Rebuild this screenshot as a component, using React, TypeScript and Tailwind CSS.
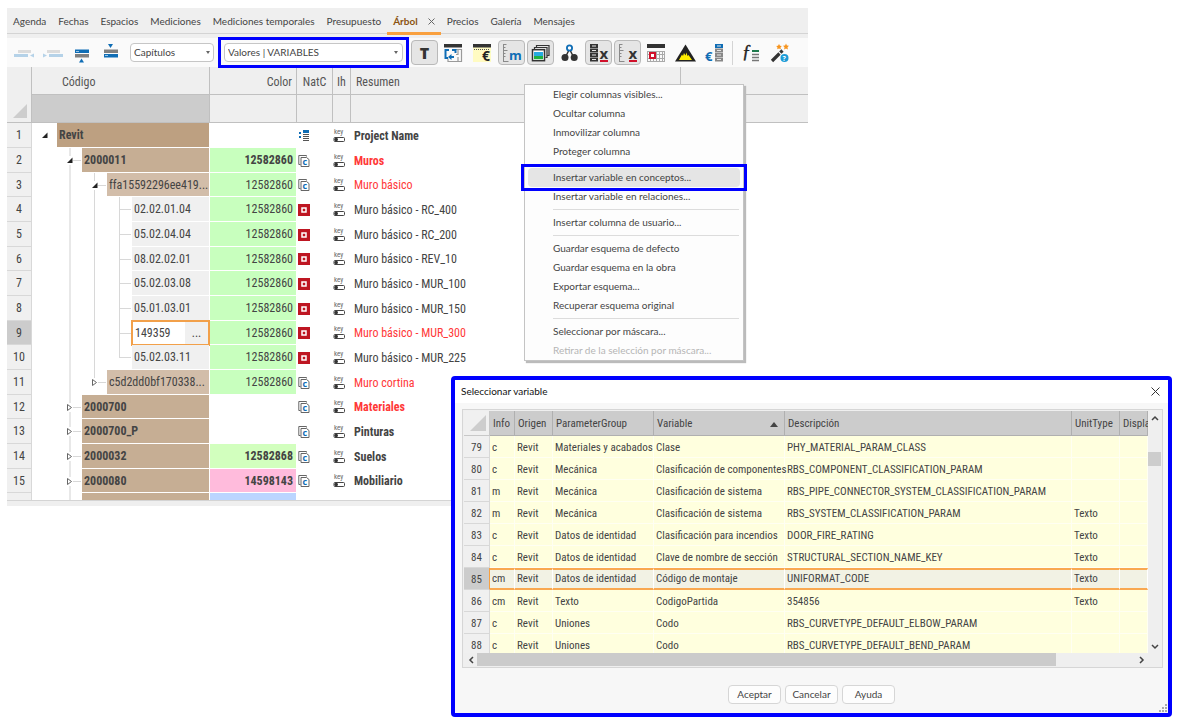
import { useState } from 'react';
import type { ReactNode } from 'react';
import clsx from 'clsx';

type Icon = 'project' | 'chapter' | 'unit';

interface TreeRow {
  id: number; level: 0 | 1 | 2 | 3; code: string; open?: boolean; last?: boolean; guides: number[];
  color?: string; fill?: string; icon: Icon; summary: string; bold?: boolean; red?: boolean;
}

const GREEN = 'bg-[#c8ffbe]';

const rows: TreeRow[] = [
  { id: 1, level: 0, code: 'Revit', open: true, guides: [], icon: 'project', summary: 'Project Name', bold: true },
  { id: 2, level: 1, code: '2000011', open: true, guides: [], color: '12582860', fill: GREEN, icon: 'chapter', summary: 'Muros', bold: true, red: true },
  { id: 3, level: 2, code: 'ffa15592296ee419...', open: true, guides: [1], color: '12582860', fill: GREEN, icon: 'chapter', summary: 'Muro básico', red: true },
  { id: 4, level: 3, code: '02.02.01.04', guides: [1, 2], color: '12582860', fill: GREEN, icon: 'unit', summary: 'Muro básico - RC_400' },
  { id: 5, level: 3, code: '05.02.04.04', guides: [1, 2], color: '12582860', fill: GREEN, icon: 'unit', summary: 'Muro básico - RC_200' },
  { id: 6, level: 3, code: '08.02.02.01', guides: [1, 2], color: '12582860', fill: GREEN, icon: 'unit', summary: 'Muro básico - REV_10' },
  { id: 7, level: 3, code: '05.02.03.08', guides: [1, 2], color: '12582860', fill: GREEN, icon: 'unit', summary: 'Muro básico - MUR_100' },
  { id: 8, level: 3, code: '05.01.03.01', guides: [1, 2], color: '12582860', fill: GREEN, icon: 'unit', summary: 'Muro básico - MUR_150' },
  { id: 9, level: 3, code: '149359', guides: [1, 2], color: '12582860', fill: GREEN, icon: 'unit', summary: 'Muro básico - MUR_300', red: true },
  { id: 10, level: 3, code: '05.02.03.11', last: true, guides: [1, 2], color: '12582860', fill: GREEN, icon: 'unit', summary: 'Muro básico - MUR_225' },
  { id: 11, level: 2, code: 'c5d2dd0bf170338...', open: false, last: true, guides: [1], color: '12582860', fill: GREEN, icon: 'chapter', summary: 'Muro cortina', red: true },
  { id: 12, level: 1, code: '2000700', open: false, guides: [], icon: 'chapter', summary: 'Materiales', bold: true, red: true },
  { id: 13, level: 1, code: '2000700_P', open: false, guides: [], icon: 'chapter', summary: 'Pinturas', bold: true },
  { id: 14, level: 1, code: '2000032', open: false, guides: [], color: '12582868', fill: 'bg-[#d2ffbe]', icon: 'chapter', summary: 'Suelos', bold: true },
  { id: 15, level: 1, code: '2000080', open: false, guides: [], color: '14598143', fill: 'bg-[#ffbbdc]', icon: 'chapter', summary: 'Mobiliario', bold: true },
];

const levelFill = ['bg-[#bda081]', 'bg-[#c6ae94]', 'bg-[#d2bda9]', 'bg-[#f0f0f0]'];

interface Variable { id: number; info: string; group: string; name: string; description: string; unit?: string }

const variables: Variable[] = [
  { id: 79, info: 'c', group: 'Materiales y acabados', name: 'Clase', description: 'PHY_MATERIAL_PARAM_CLASS' },
  { id: 80, info: 'c', group: 'Mecánica', name: 'Clasificación de componentes', description: 'RBS_COMPONENT_CLASSIFICATION_PARAM' },
  { id: 81, info: 'm', group: 'Mecánica', name: 'Clasificación de sistema', description: 'RBS_PIPE_CONNECTOR_SYSTEM_CLASSIFICATION_PARAM' },
  { id: 82, info: 'm', group: 'Mecánica', name: 'Clasificación de sistema', description: 'RBS_SYSTEM_CLASSIFICATION_PARAM', unit: 'Texto' },
  { id: 83, info: 'c', group: 'Datos de identidad', name: 'Clasificación para incendios', description: 'DOOR_FIRE_RATING', unit: 'Texto' },
  { id: 84, info: 'c', group: 'Datos de identidad', name: 'Clave de nombre de sección', description: 'STRUCTURAL_SECTION_NAME_KEY', unit: 'Texto' },
  { id: 85, info: 'cm', group: 'Datos de identidad', name: 'Código de montaje', description: 'UNIFORMAT_CODE', unit: 'Texto' },
  { id: 86, info: 'cm', group: 'Texto', name: 'CodigoPartida', description: '354856', unit: 'Texto' },
  { id: 87, info: 'c', group: 'Uniones', name: 'Codo', description: 'RBS_CURVETYPE_DEFAULT_ELBOW_PARAM' },
  { id: 88, info: 'c', group: 'Uniones', name: 'Codo', description: 'RBS_CURVETYPE_DEFAULT_BEND_PARAM' },
];

const menuGroups = [
  ['Elegir columnas visibles...', 'Ocultar columna', 'Inmovilizar columna', 'Proteger columna'],
  ['Insertar variable en conceptos...', 'Insertar variable en relaciones...'],
  ['Insertar columna de usuario...'],
  ['Guardar esquema de defecto', 'Guardar esquema en la obra', 'Exportar esquema...', 'Recuperar esquema original'],
  ['Seleccionar por máscara...', 'Retirar de la selección por máscara...'],
];

/* Toolbar drawings, all on a 27x25 canvas */
const Ruler = () => (
  <path d="M5.5 4v18M5.5 4.5h3M5.5 7.5h2M5.5 10.5h4M5.5 13.5h2M5.5 16.5h2M5.5 21.5h5" stroke="#8a8a8a" fill="none" />
);

const Server = ({ x, top = '#333', rest = '#333' }: { x: number; top?: string; rest?: string }) => (
  <g>
    {[3.5, 8, 12.5, 17].map((y, i) => (
      <g key={y}>
        <rect x={x} y={y + 0.5} width="8" height="4" fill={i === 0 ? top : rest} />
        <rect x={x + 2} y={y + 2} width="4" height="1" fill="#e5e5e5" />
      </g>
    ))}
  </g>
);

const glyphs: { name: string; on?: boolean; draw: ReactNode }[] = [
  { name: 'Ventana', draw: <>
    <rect x="4" y="4" width="18" height="3.5" fill="#333" />
    <path d="M15 9.5h6.500v12H8v-3M18 9.500v5h-2M18 17v4" stroke="#9a9a9a" strokeWidth="1.200" fill="none" />
    <path d="M9 10H5.500v8H8M12 10h3.500v3" stroke="#0f6db5" strokeWidth="2" fill="none" />
    <path d="M14 17h-4" stroke="#0f6db5" strokeWidth="2" /><path d="M8 17l3.500-3v6z" fill="#0f6db5" />
  </> },
  { name: 'Precio', draw: <>
    <rect x="4" y="7" width="18" height="15" fill="#fffbc2" />
    <rect x="4" y="4" width="18" height="3.5" fill="#333" />
    <path d="M5 9.500h16" stroke="#555" strokeDasharray="1 1" />
    <text x="13" y="21" fontSize="14" fontWeight="bold" fill="#222">€</text>
  </> },
  { name: 'Medición', on: true, draw: <>
    <Ruler />
    <text x="11" y="20" fontSize="13" fontWeight="bold" fill="#0f6db5">m</text>
  </> },
  { name: 'Capas', on: true, draw: <>
    <path d="M9.500 7V5.500h12.500v10h-1.500M7.500 9V7.500h12.500v10h-1.500" stroke="#333" strokeWidth="1.200" fill="none" />
    <rect x="5.500" y="9.700" width="12" height="11" fill="#fff" stroke="#333" strokeWidth="1.500" />
    <rect x="7" y="12" width="9" height="4" fill="#27aae1" />
    <rect x="7" y="16" width="9" height="3.200" fill="#1fb141" />
  </> },
  { name: 'Relaciones', draw: <>
    <path d="M13.500 9L9 18M13.500 9L18 18" stroke="#333" strokeWidth="1.500" />
    <circle cx="13.500" cy="8" r="2.600" fill="#fff" stroke="#0f6db5" strokeWidth="1.800" />
    <circle cx="9" cy="17.500" r="3.500" fill="#333" /><circle cx="18.200" cy="17.500" r="3.500" fill="#333" />
  </> },
  { name: 'Quitar conceptos', on: true, draw: <>
    <Server x={5} />
    <text x="14.500" y="19" fontSize="15" fontWeight="bold" fill="#333">x</text>
    <rect x="15" y="20" width="8" height="2" fill="#d0112b" />
  </> },
  { name: 'Quitar mediciones', on: true, draw: <>
    <Ruler />
    <text x="14.500" y="19" fontSize="15" fontWeight="bold" fill="#333">x</text>
    <rect x="15" y="20" width="8" height="2" fill="#d0112b" />
  </> },
  { name: 'Fechas', draw: <>
    <rect x="4" y="4" width="18" height="4" fill="#333" />
    <path d="M4.500 11v11M7.500 11v11M10.500 11v11M13.500 11v11M16.500 11v11M19.500 11v11M21.500 11v11M4 11.500h18M4 14.500h18M4 18.500h18M4 21.500h18" stroke="#aaa" />
    <rect x="7" y="13" width="5" height="5" fill="#fff" stroke="#d0112b" strokeWidth="2" />
  </> },
  { name: 'Avisos', draw: <>
    <path d="M13.500 4.500L24 21.500H3z" fill="#222" />
    <path d="M7 20l3-5.500 1 1.500 1-3 1.500 2.500 1-3 1 3.500 1-1L20 20z" fill="#ffee00" />
  </> },
  { name: 'Lista de precios', draw: <>
    <Server x={14} top="#0f6db5" rest="#888" />
    <text x="4" y="21" fontSize="13" fontWeight="bold" fill="#0f6db5">€</text>
  </> },
];

const tools: { name: string; draw: ReactNode }[] = [
  { name: 'Fórmulas', draw: <>
    <text x="5" y="18" fontSize="18" fontStyle="italic" fontFamily="Liberation Serif, serif" fill="#222" stroke="#222" strokeWidth=".4">ƒ</text>
    <path d="M15 11h7" stroke="#1f7a4d" strokeWidth="2" />
    <path d="M15 14.500h7M15 17.500h7M15 20.500h7" stroke="#777" strokeWidth="1.500" />
  </> },
  { name: 'Asistente', draw: <>
    <path d="M6 21L13.500 13.500" stroke="#333" strokeWidth="3.200" />
    <path d="M14.300 12.700L16.500 10.500" stroke="#333" strokeWidth="3.200" />
    <path d="M13 4l1 1.700 1.800.4-1.300 1.300.3 1.900-1.800-.9-1.800.9.3-1.900-1.300-1.300 1.800-.4zM20 3.500l.9 2 2.100.3-1.500 1.500.4 2.100-1.900-1-1.900 1 .4-2.100L17 5.800l2.100-.3z" fill="#f7941d" />
    <circle cx="18.500" cy="18" r="4" fill="#1b9ad6" />
    <text x="16.500" y="21" fontSize="7" fontWeight="bold" fill="#fff">?</text>
  </> },
];

const moves: { name: string; draw: ReactNode }[] = [
  { name: 'Subir nivel', draw: <>
    <rect x="8" y="10" width="13" height="3" fill="#dcdcdc" /><rect x="4" y="14" width="14" height="3" fill="#b5d2e8" />
    <path d="M24 13.500v4l-4-2z" fill="#b5d2e8" />
  </> },
  { name: 'Bajar nivel', draw: <>
    <rect x="8" y="10" width="13" height="3" fill="#dcdcdc" /><rect x="10" y="14" width="14" height="3" fill="#b5d2e8" />
    <path d="M4 13.500v4l4-2z" fill="#b5d2e8" />
  </> },
  { name: 'Subir', draw: <>
    <rect x="7" y="9.500" width="14" height="3.500" fill="#0f6db5" /><rect x="7" y="14" width="14" height="3.500" fill="#808080" />
    <path d="M11 22.500h5l-2.500-4z" fill="#0f6db5" /><rect x="8" y="11" width="3" height="1" fill="#9cc4e2" />
  </> },
  { name: 'Bajar', draw: <>
    <rect x="7" y="9.500" width="14" height="3.500" fill="#808080" /><rect x="7" y="14" width="14" height="3.500" fill="#0f6db5" />
    <path d="M11 4h5l-2.500 4z" fill="#0f6db5" /><rect x="8" y="15" width="3" height="1" fill="#9cc4e2" />
  </> },
];

const ToolButton = ({ name, on, children }: { name: string; on?: boolean; children: ReactNode }) => (
  <button aria-label={name} className={clsx('h-[25px] w-[27px] shrink-0 rounded border', on ? 'border-[#b9b9b9] bg-[#e5e5e5]' : 'border-transparent')}>
    <svg viewBox="1 1 25 23" className="block h-[23px] w-[25px] font-['Open_Sans',sans-serif]">{children}</svg>
  </button>
);

const NatIcon = ({ icon }: { icon: Icon }) => (
  <svg viewBox="0 0 12 12" className="block size-3 font-['Open_Sans',sans-serif]">
    {icon === 'project' && <>
      <path d="M1 3h2M1 7h2" stroke="#0f6db5" strokeWidth="2" />
      <rect x="5" y="0" width="6" height="3" fill="#0f6db5" />
      <path d="M5 4.500h6M5 6.500h6M5 8.500h6M5 10.500h6" stroke="#555" strokeWidth="1.200" />
    </>}
    {icon === 'chapter' && <>
      <path d="M2.500 9.500H.8V.5h7.700v1" stroke="#666" fill="none" />
      <path d="M3 2.500h5.500l2.500 2v7H3z" stroke="#666" fill="#fff" />
      <text x="4.500" y="10" fontSize="9" fontWeight="bold" fill="#0f6db5">c</text>
    </>}
    {icon === 'unit' && <>
      <rect x="0" y="0" width="12" height="12" fill="#be1622" />
      <rect x="4" y="4" width="4" height="4" fill="none" stroke="#fff" strokeWidth="1.500" />
    </>}
  </svg>
);

const KeyIcon = () => (
  <svg viewBox="0 0 12 12" className="block size-3 overflow-visible">
    <text x="1" y="4" fontSize="7" fill="#666">key</text>
    <rect x="1" y="7.500" width="10.500" height="4" rx="1" fill="#fff" stroke="#444" />
    <circle cx="3.200" cy="9.500" r="1.800" fill="#333" />
  </svg>
);

const Caret = ({ open }: { open: boolean }) => (
  <svg viewBox="0 0 7 9" className="block h-[9px] w-[7px]">
    {open ? <path d="M6.500 1.500v5.500H1z" fill="#222" /> : <path d="M1.500 1.500v6l4-3z" fill="#fff" stroke="#666" />}
  </svg>
);

const CodeCell = ({ row }: { row: TreeRow }) => (
  <div className="flex h-full pr-px">
    {Array.from({ length: row.level + 1 }, (_, i) => {
      const own = i === row.level;
      const line = i > 0 && (own || row.guides.includes(i));
      return (
        <span key={i} className="relative flex h-full w-[25px] shrink-0 items-center">
          {line && <span className={clsx('absolute top-0 left-3 w-px', i === 1 ? 'border-l-2 border-[#e8e8e8]' : 'bg-[#d8d8d8]', own && row.last ? 'h-1/2' : 'h-full')} />}
          {own && i > 0 && <span className="absolute right-px left-3 h-px bg-[#d8d8d8]" />}
          {own && row.open !== undefined && <span className="relative ml-[9px] bg-white"><Caret open={row.open} /></span>}
        </span>
      );
    })}
    {row.id === 9 ? (
      <div className="-mx-px -my-px flex grow border-2 border-[#f2a04a] bg-white">
        <input aria-label="Código" defaultValue={row.code} className="w-0 grow pl-[2px] outline-none" />
        <button aria-label="Buscar código" className="w-[23px] bg-[#f0f0f0]">...</button>
      </div>
    ) : (
      <div className={clsx('flex min-w-0 grow items-center border-b border-white pl-[2px] whitespace-nowrap', levelFill[row.level], row.level < 2 && 'font-bold')}>{row.code}</div>
    )}
  </div>
);

const ContextMenu = () => (
  <ul role="menu" className="absolute top-[76px] left-[517px] w-[220px] border border-[#c4c4c4] bg-[#fdfdfd] text-[10px] text-[#444] shadow-[2px_2px_1px_#bbb]">
    {menuGroups.map((group, g) => (
      <li key={g} role="none">
        {g > 0 && <hr className="my-[3px] mr-1 ml-7 border-[#dcdcdc]" />}
        {group.map((label) => {
          const active = label === 'Insertar variable en conceptos...';
          return (
            <button key={label} role="menuitem" disabled={label.startsWith('Retirar')} className="relative flex h-[19px] w-full items-center px-[3px] whitespace-nowrap disabled:text-[#b5b5b5]">
              <span className={clsx('flex h-full w-full items-center rounded pl-[25px]', active && 'bg-[#e5e5e5]')}>{label}</span>
              {active && <span className="absolute -inset-x-1 -inset-y-1 border-3 border-[#0000ff]" />}
            </button>
          );
        })}
      </li>
    ))}
  </ul>
);

const ScrollArrow = ({ d, label }: { d: string; label: string }) => (
  <button aria-label={label} className="flex size-[13px] shrink-0 items-center justify-center">
    <svg viewBox="0 0 8 8" className="size-2"><path d={d} fill="none" stroke="#444" strokeWidth="1.500" /></svg>
  </button>
);

const VariableDialog = ({ onClose }: { onClose: () => void }) => {
  const [selected, setSelected] = useState(85);
  const headers = ['Info', 'Origen', 'ParameterGroup', 'Variable', 'Descripción', 'UnitType', 'Display'];

  return (
    <div role="dialog" aria-labelledby="dialog-title" className="absolute top-[376px] right-[18px] left-[451px] rounded-sm border-4 border-[#0000ff] bg-[#f7f7f7]">
      <div className="flex h-[23px] items-center justify-between bg-white pr-2 pl-[6px]">
        <h2 id="dialog-title" className="text-[10px] text-[#111]">Seleccionar variable</h2>
        <button aria-label="Cerrar" onClick={onClose}>
          <svg viewBox="0 0 9 9" className="size-[9px]"><path d="M.5.5l8 8M8.500.5l-8 8" stroke="#333" /></svg>
        </button>
      </div>

      <div className="mt-[6px] mr-[5px] ml-[7px] border border-[#d6d6d6] bg-[#efefef] p-px">
        <div className="flex h-[242px]">
          <div className="min-w-0 grow overflow-hidden">
            <table className="w-full table-fixed border-separate border-spacing-0 font-['Roboto_Condensed','Liberation_Sans',sans-serif] text-[11px] leading-4 whitespace-nowrap text-[#444]">
              <colgroup>
                <col className="w-[26px]" /><col className="w-[25px]" /><col className="w-[38px]" /><col className="w-[101px]" />
                <col className="w-[131px]" /><col /><col className="w-12" /><col className="w-7" />
              </colgroup>
              <thead>
                <tr className="h-[25px]">
                  <th aria-label="Fila" className="border-r border-b border-[#c8c8c8] bg-[#f0f0f0]">
                    <svg viewBox="0 0 16 16" className="ml-[6px] size-4"><path d="M16 0v16H0z" fill="#cdcdcd" /></svg>
                  </th>
                  {headers.map((h) => (
                    <th key={h} className="border-r border-b border-[#b0b0b0] bg-[#ccc] p-0 pt-[2px] pl-[3px] text-left font-normal">
                      <span className="flex items-center justify-between pr-[6px]">
                        {h}
                        {h === 'Variable' && <svg viewBox="0 0 8 5" className="h-[5px] w-2"><path d="M4 0l4 5H0z" fill="#444" /></svg>}
                      </span>
                    </th>
                  ))}
                </tr>
              </thead>
              <tbody>
                {variables.map((v) => {
                  const on = v.id === selected;
                  const cell = clsx('border-r p-0 pl-[2px]', on ? 'border-y-2 border-t-[#f9a850] border-r-white border-b-[#f9a850] bg-[#f2f2e4]' : 'border-b border-[#fffff2] bg-[#ffffde] pt-[3px]');
                  return (
                    <tr key={v.id} className="h-[22px]" onClick={() => setSelected(v.id)}>
                      <th className={clsx('border-r border-b p-0 pt-[3px] text-center font-normal', on ? 'border-[#d8d8d8] border-r-[#f9a03f] bg-[#ccc]' : 'border-[#d8d8d8] bg-[#f0f0f0]')}>{v.id}</th>
                      <td className={cell}>{v.info}</td>
                      <td className={cell}>Revit</td>
                      <td className={cell}>{v.group}</td>
                      <td className={cell}>{v.name}</td>
                      <td className={cell}>{v.description}</td>
                      <td className={cell}>{v.unit}</td>
                      <td className={cell} />
                    </tr>
                  );
                })}
              </tbody>
            </table>
          </div>
          <div className="flex w-[13px] flex-col justify-between">
            <ScrollArrow label="Arriba" d="M1 6l3-3 3 3" />
            <div className="grow pt-7"><div className="h-[14px] bg-[#cdcdcd]" /></div>
            <ScrollArrow label="Abajo" d="M1 2l3 3 3-3" />
          </div>
        </div>
        <div className="flex h-[13px] pr-[13px]">
          <ScrollArrow label="Izquierda" d="M6 1L3 4l3 3" />
          <div className="grow"><div className="h-full w-[88%] bg-[#cbcbcb]" /></div>
          <ScrollArrow label="Derecha" d="M2 1l3 3-3 3" />
        </div>
      </div>

      <div className="mt-[17px] mb-[9px] flex justify-center gap-1">
        {['Aceptar', 'Cancelar', 'Ayuda'].map((label) => (
          <button key={label} className="h-[19px] w-[53px] rounded border border-[#d6d6d6] bg-[#fdfdfd] text-[10px] text-[#444]">{label}</button>
        ))}
      </div>
      <svg viewBox="0 0 8 8" className="absolute right-px bottom-px size-2" fill="#aaa">
        <path d="M6 0h2v2H6zM3 3h2v2H3zM6 3h2v2H6zM0 6h2v2H0zM3 6h2v2H3zM6 6h2v2H6z" />
      </svg>
    </div>
  );
};

const App = () => {
  const [dialogOpen, setDialogOpen] = useState(true);
  const head = 'border-r border-b border-[#c0c0c0] p-0 font-normal';

  return (
    <div className="relative min-h-[728px] bg-white pt-2 pr-[382px] pl-[7px] font-['Lato','Open_Sans',sans-serif]">
      <main className="relative bg-[#efefef]">
        {/* Tabs */}
        <nav className="flex h-[26px] items-stretch gap-3 border-b border-[#d4d4d4] px-[6px] pt-[2px] text-[10px] text-[#444]">
          {['Agenda', 'Fechas', 'Espacios', 'Mediciones', 'Mediciones temporales', 'Presupuesto'].map((t) => (
            <a key={t} href="#" className="flex items-center whitespace-nowrap">{t}</a>
          ))}
          <span className="-mx-[6px] -mb-[2px] flex items-center gap-[10px] border-b-3 border-[#f9a03f] px-[6px]">
            <a href="#" aria-current="page" className="font-bold text-[#8a5210]">Árbol</a>
            <button aria-label="Cerrar Árbol"><svg viewBox="0 0 7 7" className="size-[7px]"><path d="M.5.5l6 6M6.500.5l-6 6" stroke="#666" /></svg></button>
          </span>
          {['Precios', 'Galería', 'Mensajes'].map((t) => (
            <a key={t} href="#" className="flex items-center">{t}</a>
          ))}
        </nav>

        {/* Toolbar */}
        <div className="mt-1 flex h-[29px] items-center gap-[2px] bg-[#fafafa] pl-[3px] text-[10px] text-[#444]">
          {moves.map((m) => <ToolButton key={m.name} name={m.name}>{m.draw}</ToolButton>)}
          <div className="relative ml-1 shrink-0">
            <select aria-label="Nivel" className="h-[19px] w-[84px] appearance-none rounded border border-[#c6c6c6] bg-white pl-[3px]"><option>Capítulos</option></select>
            <svg viewBox="0 0 4 3" className="pointer-events-none absolute top-2 right-1 h-[3px] w-1"><path d="M0 0h4L2 3z" fill="#666" /></svg>
          </div>
          <div className="relative ml-[2px] shrink-0 border-3 border-[#0000ff] p-[3px]">
            <select aria-label="Esquema" className="h-[19px] w-[179px] appearance-none rounded border border-[#c6c6c6] bg-white pl-[3px]"><option>Valores | VARIABLES</option></select>
            <svg viewBox="0 0 4 3" className="pointer-events-none absolute top-[11px] right-2 h-[3px] w-1"><path d="M0 0h4L2 3z" fill="#666" /></svg>
          </div>
          <button aria-label="Texto" className="h-[25px] w-[27px] shrink-0 rounded border border-[#b9b9b9] bg-[#e5e5e5] font-['Open_Sans',sans-serif] text-base leading-none font-extrabold text-[#333]">T</button>
          {glyphs.map((g) => <ToolButton key={g.name} name={g.name} on={g.on}>{g.draw}</ToolButton>)}
          <span className="mx-[2px] h-6 w-px shrink-0 bg-[#d4d4d4]" />
          {tools.map((t) => <ToolButton key={t.name} name={t.name}>{t.draw}</ToolButton>)}
        </div>

        {/* Tree grid */}
        <div className="h-[433px] overflow-hidden">
          <table className="w-full table-fixed border-separate border-spacing-0 font-['Roboto_Condensed','Liberation_Sans',sans-serif] text-xs whitespace-nowrap text-[#444]">
            <colgroup>
              <col className="w-[25px]" /><col className="w-[178px]" /><col className="w-[87px]" /><col className="w-9" />
              <col className="w-[18px]" /><col className="w-[330px]" /><col />
            </colgroup>
            <thead className="text-[#555]">
              <tr className="h-7">
                <th rowSpan={2} aria-label="Fila" className={clsx(head, 'align-bottom')}>
                  <svg viewBox="0 0 14 14" className="mb-1 ml-[6px] size-[14px]"><path d="M14 0v14H0z" fill="#cdcdcd" /></svg>
                </th>
                <th className={clsx(head, 'pt-[2px] pl-[30px] text-left')}>Código</th>
                <th className={clsx(head, 'pt-[2px] pr-1 text-right')}>Color</th>
                <th className={clsx(head, 'pt-[2px]')}>NatC</th>
                <th className={clsx(head, 'pt-[2px]')}>Ih</th>
                <th className={clsx(head, 'pt-[2px] pl-[5px] text-left')}>Resumen</th>
                <th className="border-b border-[#c0c0c0] p-0" />
              </tr>
              <tr className="h-7">
                <td className={clsx(head, 'bg-[#ccc]')} />
                {[1, 2, 3, 4].map((n) => <td key={n} className={head} />)}
                <td className="border-b border-[#c0c0c0] p-0" />
              </tr>
            </thead>
            <tbody className="bg-white">
              {rows.map((r) => (
                <tr key={r.id} className="h-[25px] nth-[3n]:h-6">
                  <th className={clsx('border-r border-b border-[#d8d8d8] p-0 text-center font-normal', r.id === 9 ? 'bg-[#ccc]' : 'bg-[#f0f0f0]')}>{r.id}</th>
                  <td className="h-[inherit] p-0"><CodeCell row={r} /></td>
                  <td className={clsx('border-r border-b border-white p-0 pr-[3px] text-right', r.fill, r.bold && 'font-bold')}>{r.color}</td>
                  <td className="p-0 pl-px"><NatIcon icon={r.icon} /></td>
                  <td className="p-0"><KeyIcon /></td>
                  <td className={clsx('p-0 pl-[3px]', r.bold && 'font-bold', r.red && 'text-[#ff3838]')}>{r.summary}</td>
                  <td />
                </tr>
              ))}
              <tr className="h-[25px]">
                <th className="border-r border-[#d8d8d8] bg-[#f0f0f0]" />
                <td className="h-[inherit] p-0">
                  <div className="flex h-full pr-px pl-[37px]"><span className="w-[13px] border-l-2 border-[#e8e8e8]" /><span className="grow bg-[#c6ae94]" /></div>
                </td>
                <td className="border-r border-white bg-[#bbd5ff]" />
                <td colSpan={4} />
              </tr>
            </tbody>
          </table>
        </div>
        <div className="h-[6px] border-t border-[#d4d4d4]" />

        <ContextMenu />
      </main>

      {dialogOpen && <VariableDialog onClose={() => setDialogOpen(false)} />}
    </div>
  );
};

export default App;
